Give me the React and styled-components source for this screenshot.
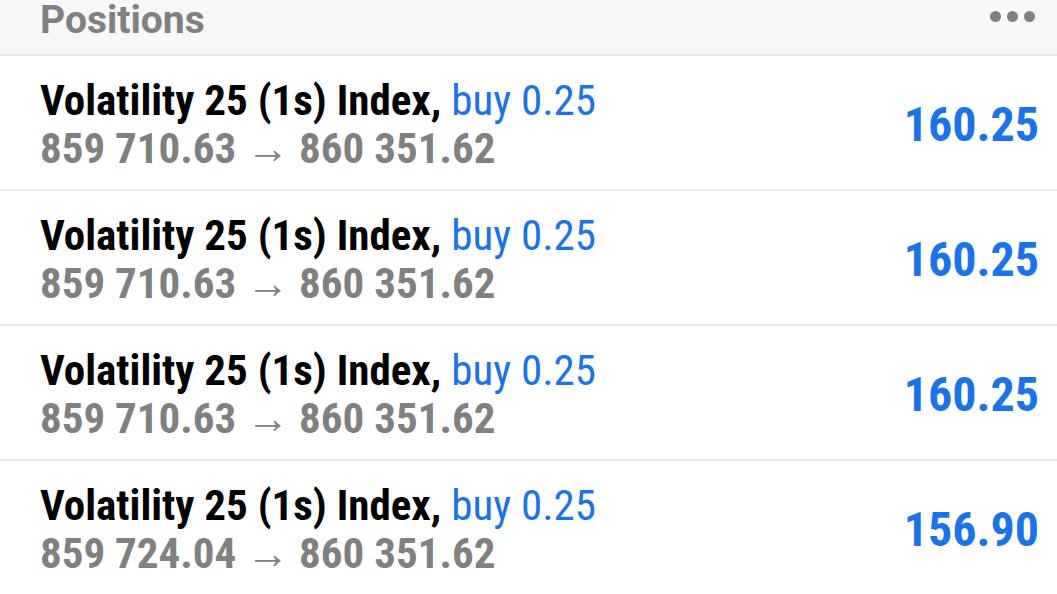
import React from 'react';
import styled, { createGlobalStyle } from 'styled-components';

const GlobalStyle = createGlobalStyle`
  html, body {
    margin: 0;
    padding: 0;
    background: #ffffff;
  }
  body {
    font-family: Roboto, "Liberation Sans", sans-serif;
    overflow: hidden;
  }
`;

const positions = [
  { symbol: 'Volatility 25 (1s) Index,', side: 'buy', volume: '0.25', open: '859 710.63', current: '860 351.62', profit: '160.25' },
  { symbol: 'Volatility 25 (1s) Index,', side: 'buy', volume: '0.25', open: '859 710.63', current: '860 351.62', profit: '160.25' },
  { symbol: 'Volatility 25 (1s) Index,', side: 'buy', volume: '0.25', open: '859 710.63', current: '860 351.62', profit: '160.25' },
  { symbol: 'Volatility 25 (1s) Index,', side: 'buy', volume: '0.25', open: '859 724.04', current: '860 351.62', profit: '156.90' },
];

const App = () => {
  return (
    <>
      <GlobalStyle />
      <Screen>
        <Header>
          <Title>Positions</Title>
          <MoreButton aria-label="More">
            <Dot />
            <Dot />
            <Dot />
          </MoreButton>
        </Header>
        <List>
          {positions.map((p, i) => (
            <Row key={i}>
              <Info>
                <SymbolLine>
                  {p.symbol} <Side>{p.side} {p.volume}</Side>
                </SymbolLine>
                <PriceLine>
                  {p.open} <Arrow>→</Arrow> {p.current}
                </PriceLine>
              </Info>
              <Profit>{p.profit}</Profit>
            </Row>
          ))}
        </List>
      </Screen>
    </>
  );
};

const Screen = styled.div`
  width: 1057px;
  height: 594px;
  display: flex;
  flex-direction: column;
  background: #ffffff;
`;

const Header = styled.div`
  height: 54px;
  flex-shrink: 0;
  display: flex;
  align-items: flex-start;
  justify-content: space-between;
  padding: 0 22px 0 40px;
  background: #f7f7f7;
  border-bottom: 2px solid #e4e4e4;
`;

const Title = styled.div`
  font-size: 39px;
  line-height: 40px;
  font-weight: 700;
  color: #808080;
`;

const MoreButton = styled.div`
  display: flex;
  gap: 6px;
  padding-top: 11px;
`;

const Dot = styled.span`
  width: 11px;
  height: 11px;
  border-radius: 50%;
  background: #808080;
`;

const List = styled.div`
  display: flex;
  flex-direction: column;
`;

const Row = styled.div`
  height: 133px;
  flex-shrink: 0;
  display: flex;
  align-items: center;
  justify-content: space-between;
  padding: 0 18px 0 40px;
  border-bottom: 2px solid #e6e6e6;
  font-stretch: 75%;
`;

const Info = styled.div`
  display: flex;
  flex-direction: column;
  padding-top: 3px;
`;

const SymbolLine = styled.div`
  font-size: 43px;
  line-height: 48px;
  font-weight: 700;
  color: #000000;
  white-space: nowrap;
`;

const Side = styled.span`
  font-weight: 400;
  color: #1a73e8;
`;

const PriceLine = styled.div`
  font-size: 43px;
  line-height: 48px;
  font-weight: 700;
  color: #808080;
  white-space: nowrap;
`;

const Arrow = styled.span`
  font-weight: 400;
`;

const Profit = styled.div`
  font-size: 48px;
  line-height: 56px;
  font-weight: 700;
  color: #1a73e8;
  padding-top: 4px;
`;

export default App;
